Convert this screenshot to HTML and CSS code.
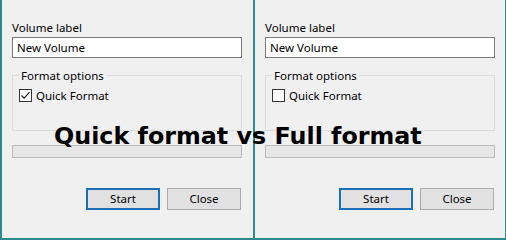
FILE: index.html
```html
<!DOCTYPE html>
<html lang="en">
<head>
  <meta charset="UTF-8" />
  <title>Quick format vs Full format</title>
  <link rel="stylesheet" href="styles.css">
</head>
<body>
  <div class="compare">
    <!-- left: quick format ticked -->
    <div class="dialog">
      <div class="field-title">Volume label</div>
      <div class="text-box">New Volume</div>
      <fieldset class="group">
        <legend>Format options</legend>
        <div class="check-row">
          <span class="check-box">
            <svg width="11" height="11" viewBox="0 0 11 11"><path d="M1.5 5.5 L4.2 8.2 L9.5 2.2" fill="none" stroke="#222" stroke-width="1.2"/></svg>
          </span>
          Quick Format
        </div>
      </fieldset>
      <div class="progress"></div>
      <div class="buttons">
        <span class="btn btn-default">Start</span>
        <span class="btn">Close</span>
      </div>
    </div>
    <!-- right: quick format not ticked -->
    <div class="dialog dialog-last">
      <div class="field-title">Volume label</div>
      <div class="text-box">New Volume</div>
      <fieldset class="group">
        <legend>Format options</legend>
        <div class="check-row">
          <span class="check-box"></span>
          Quick Format
        </div>
      </fieldset>
      <div class="progress"></div>
      <div class="buttons">
        <span class="btn btn-default">Start</span>
        <span class="btn">Close</span>
      </div>
    </div>
    <div class="caption">Quick format vs Full format</div>
  </div>
</body>
</html>
```

FILE: styles.css
```css
body {
  margin: 0;
  background: #f0f0f0;
  font-family: "Noto Sans", "Open Sans", sans-serif;
  font-size: 11.5px;
  color: #000;
}
.compare {
  position: relative;
  display: flex;
  width: 506px;
  height: 240px;
}
.dialog {
  box-sizing: border-box;
  width: 253px;
  height: 240px;
  padding: 20px 11px 0 10px;
  border-left: 2px solid #2e8a8e;
  border-bottom: 2px solid #2e8a8e;
  background: #f0f0f0;
}
.dialog-last {
  padding-right: 10px;
  border-right: 1px solid #2e8a8e;
}
.field-title {
  line-height: 15px;
}
.text-box {
  box-sizing: border-box;
  height: 21px;
  margin-top: 2px;
  padding-left: 4px;
  line-height: 19px;
  background: #fff;
  border: 1px solid #7a7a7a;
}
.group {
  margin: 10px 0 0 0;
  padding: 0 6px 28px 6px;
  border: 1px solid #dcdcdc;
}
.group legend {
  padding: 0 2px;
  line-height: 15px;
}
.check-row {
  display: flex;
  align-items: center;
  gap: 4px;
  height: 13px;
  margin-top: 6px;
  line-height: 13px;
}
.check-box {
  box-sizing: border-box;
  display: flex;
  align-items: center;
  justify-content: center;
  width: 13px;
  height: 13px;
  background: #fff;
  border: 1px solid #333;
}
.progress {
  box-sizing: border-box;
  height: 13px;
  margin-top: 14px;
  background: #e6e6e6;
  border: 1px solid #bcbcbc;
}
.buttons {
  display: flex;
  justify-content: flex-end;
  gap: 7px;
  margin-top: 30px;
  padding-right: 1px;
}
.btn {
  box-sizing: border-box;
  width: 74px;
  height: 22px;
  line-height: 20px;
  text-align: center;
  background: #e1e1e1;
  border: 1px solid #adadad;
}
.btn-default {
  line-height: 18px;
  border: 2px solid #1d6fb5;
}
.caption {
  position: absolute;
  left: 54px;
  top: 124px;
  font-family: "DejaVu Sans", sans-serif;
  font-weight: bold;
  font-size: 23.8px;
  line-height: 24px;
  color: #000;
  white-space: nowrap;
}
```
